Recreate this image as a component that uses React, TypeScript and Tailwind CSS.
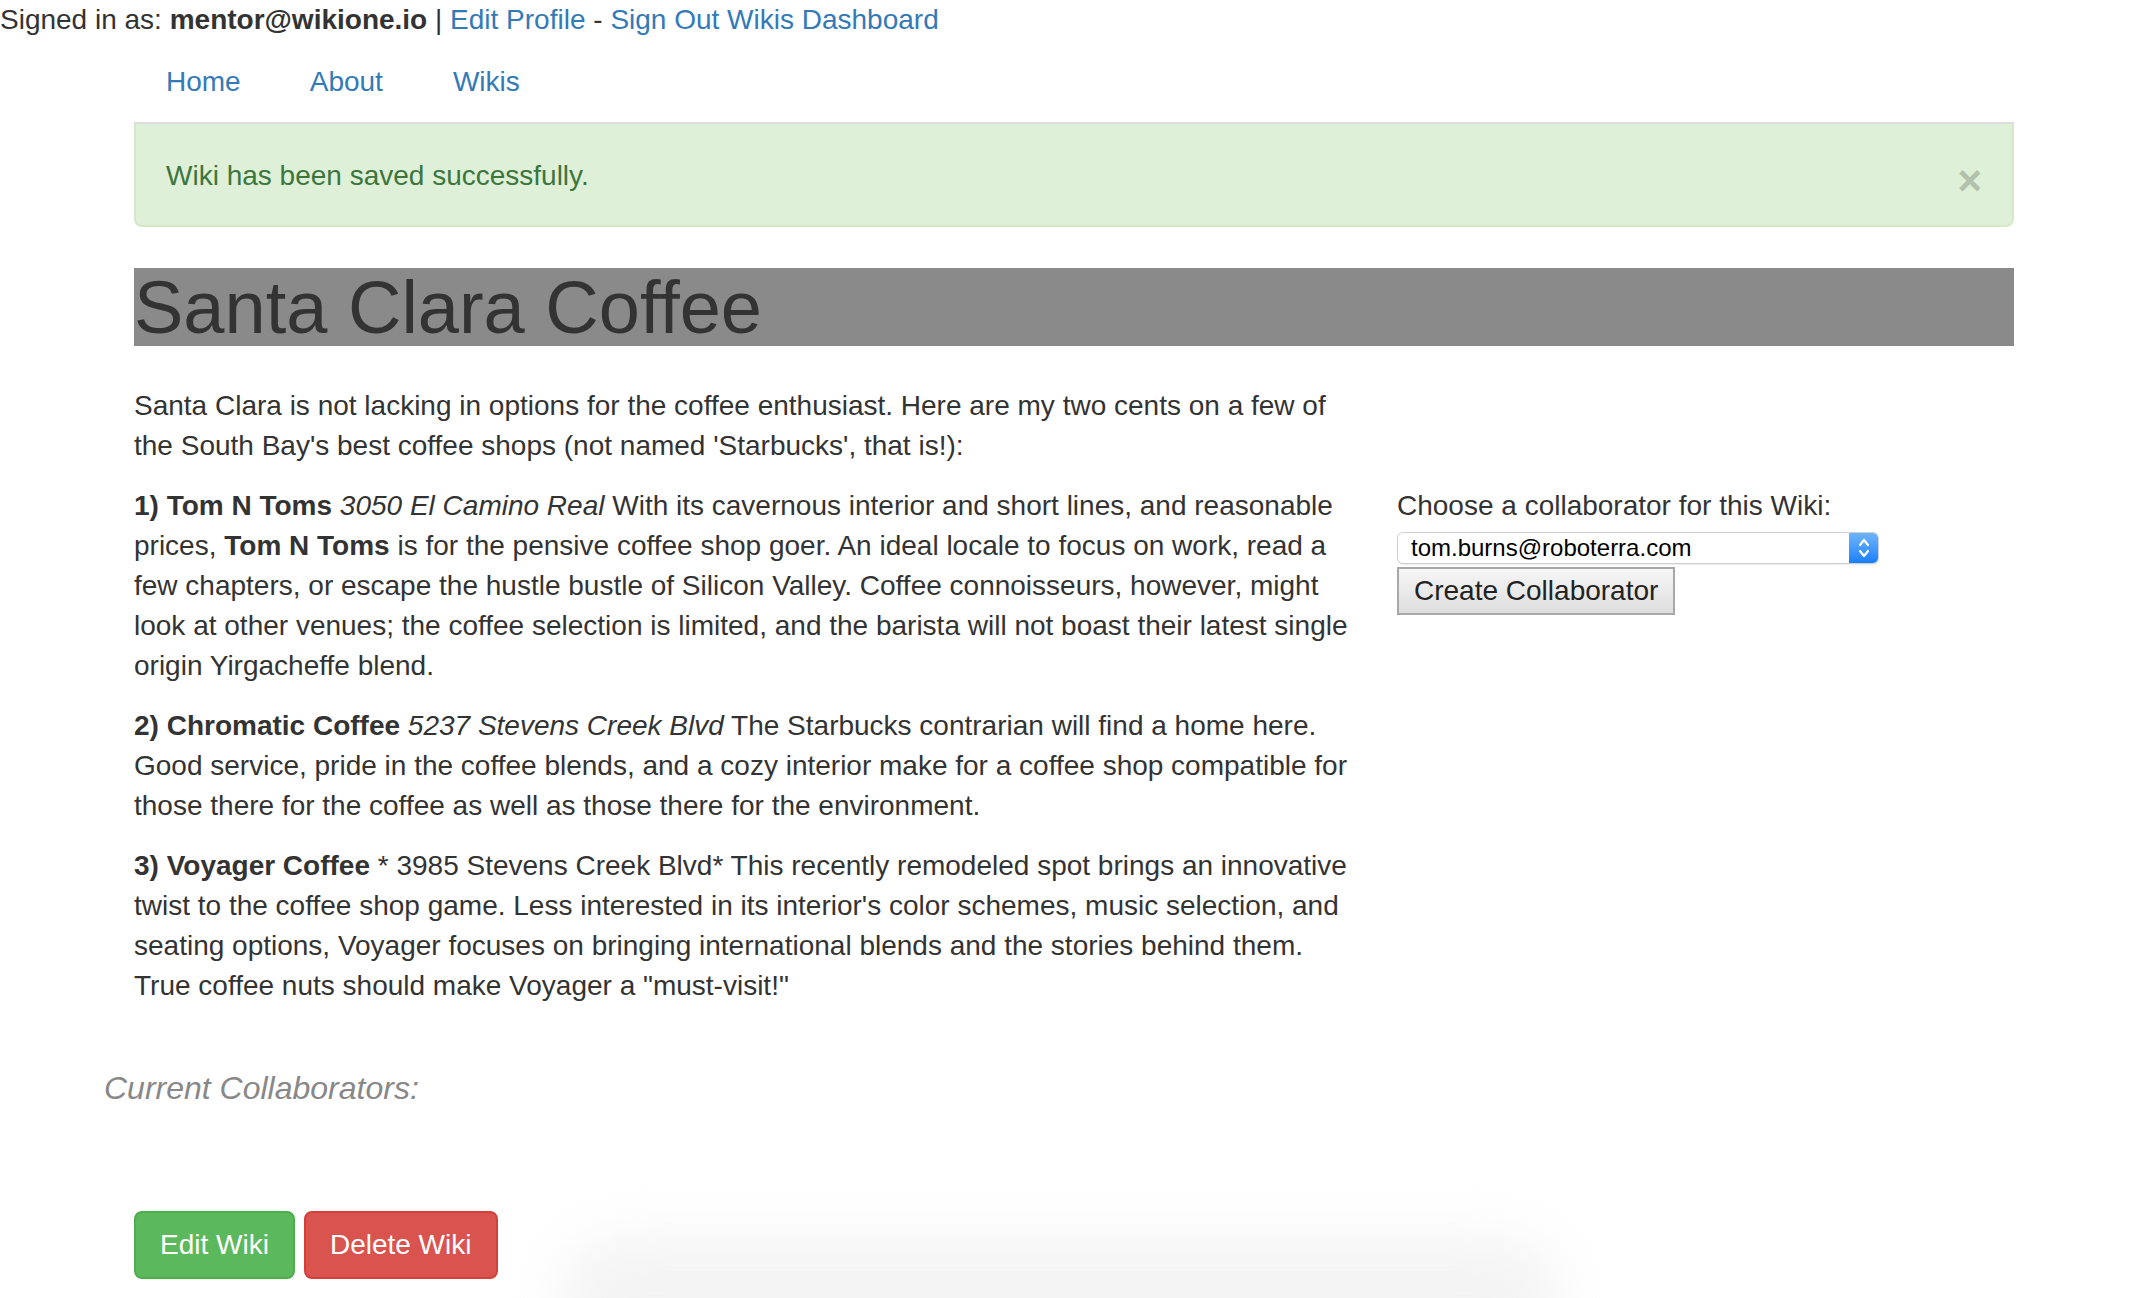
import React from "react";

const link = "text-[#337ab7]";

function Select() {
  return (
    <div className="flex h-[32px] w-[482px] items-center rounded-[6px] border border-[#cfcfcf] bg-white shadow-[0_1px_1px_rgba(0,0,0,0.08)]">
      <div className="flex-1 pl-[13px] text-[24px] leading-[30px] text-black">tom.burns@roboterra.com</div>
      <div className="flex h-[30px] w-[29px] items-center justify-center rounded-r-[5px] bg-gradient-to-b from-[#6eb4fb] to-[#157ffb]">
        <svg width="14" height="26" viewBox="0 0 14 26" fill="none" stroke="white" strokeWidth="2.2" strokeLinecap="round" strokeLinejoin="round">
          <path d="M3 10 L7 5 L11 10" />
          <path d="M3 16 L7 21 L11 16" />
        </svg>
      </div>
    </div>
  );
}

export default function App() {
  return (
    <div className="relative min-h-[1298px] overflow-hidden bg-white font-['Liberation_Sans',Arial,Helvetica,sans-serif] text-[28px] leading-[40px] text-[#333]">
      <div className="h-[40px] whitespace-nowrap">
        Signed in as: <b>mentor@wikione.io</b> | <span className={link}>Edit Profile</span> -{" "}
        <span className={link}>Sign Out</span> <span className={link}>Wikis Dashboard</span>
      </div>

      <div className="ml-[104px] w-[1940px] px-[30px]">
        <nav className="flex h-[84px] items-center border-b-2 border-[#ddd] pt-[2px]">
          <span className={`${link} ml-[2px] mr-[9px] px-[30px]`}>Home</span>
          <span className={`${link} mr-[10px] px-[30px]`}>About</span>
          <span className={`${link} px-[30px]`}>Wikis</span>
        </nav>

        <div className="relative h-[103px] rounded-b-[8px] border-2 border-t-0 border-[#d6e9c6] bg-[#dff0d8] px-[30px] pt-[32px] text-[#3c763d]">
          Wiki has been saved successfully.
          <span className="absolute right-[30px] top-[37px] text-[42px] font-bold leading-[40px] text-[#b1c1ab]">×</span>
        </div>

        <h1 className="mt-[41px] h-[78px] whitespace-nowrap bg-[#8a8a8a] text-[74px] leading-[79px] text-[#333]">
          Santa Clara Coffee
        </h1>

        <div className="mt-[40px] flex">
          <div className="w-[1263px] shrink-0 whitespace-nowrap">
            <p className="mb-[20px]">
              Santa Clara is not lacking in options for the coffee enthusiast. Here are my two cents on a few of
              <br />
              the South Bay's best coffee shops (not named 'Starbucks', that is!):
            </p>
            <p className="mb-[20px]">
              <b>1) Tom N Toms</b> <i>3050 El Camino Real</i> With its cavernous interior and short lines, and reasonable
              <br />
              prices, <b>Tom N Toms</b> is for the pensive coffee shop goer. An ideal locale to focus on work, read a
              <br />
              few chapters, or escape the hustle bustle of Silicon Valley. Coffee connoisseurs, however, might
              <br />
              look at other venues; the coffee selection is limited, and the barista will not boast their latest single
              <br />
              origin Yirgacheffe blend.
            </p>
            <p className="mb-[20px]">
              <b>2) Chromatic Coffee</b> <i>5237 Stevens Creek Blvd</i> The Starbucks contrarian will find a home here.
              <br />
              Good service, pride in the coffee blends, and a cozy interior make for a coffee shop compatible for
              <br />
              those there for the coffee as well as those there for the environment.
            </p>
            <p className="mb-[20px]">
              <b>3) Voyager Coffee</b> * 3985 Stevens Creek Blvd* This recently remodeled spot brings an innovative
              <br />
              twist to the coffee shop game. Less interested in its interior's color schemes, music selection, and
              <br />
              seating options, Voyager focuses on bringing international blends and the stories behind them.
              <br />
              True coffee nuts should make Voyager a "must-visit!"
            </p>
          </div>

          <div className="mt-[100px] flex flex-col items-start">
            <div className="mb-[6px] whitespace-nowrap">Choose a collaborator for this Wiki:</div>
            <Select />
            <button className="mt-[3px] h-[48px] border-2 border-[#a8a8a8] bg-gradient-to-b from-[#f6f6f6] to-[#dedede] px-[15px] text-[28px] leading-[40px] text-[#222]">
              Create Collaborator
            </button>
          </div>
        </div>

        <div className="-ml-[30px] mt-[42px] text-[32px] italic leading-[40px] text-[#888]">Current Collaborators:</div>

        <div className="mt-[103px] flex gap-[9px]">
          <button className="h-[68px] rounded-[8px] border-2 border-[#4cae4c] bg-[#5cb85c] px-[24px] text-[28px] leading-[40px] text-white">
            Edit Wiki
          </button>
          <button className="h-[68px] rounded-[8px] border-2 border-[#d43f3a] bg-[#d9534f] px-[24px] text-[28px] leading-[40px] text-white">
            Delete Wiki
          </button>
        </div>
      </div>

      <div className="pointer-events-none absolute bottom-[-90px] left-[560px] h-[150px] w-[1000px] rounded-[60px] bg-[#ececec] opacity-60 blur-[28px]" />
    </div>
  );
}
